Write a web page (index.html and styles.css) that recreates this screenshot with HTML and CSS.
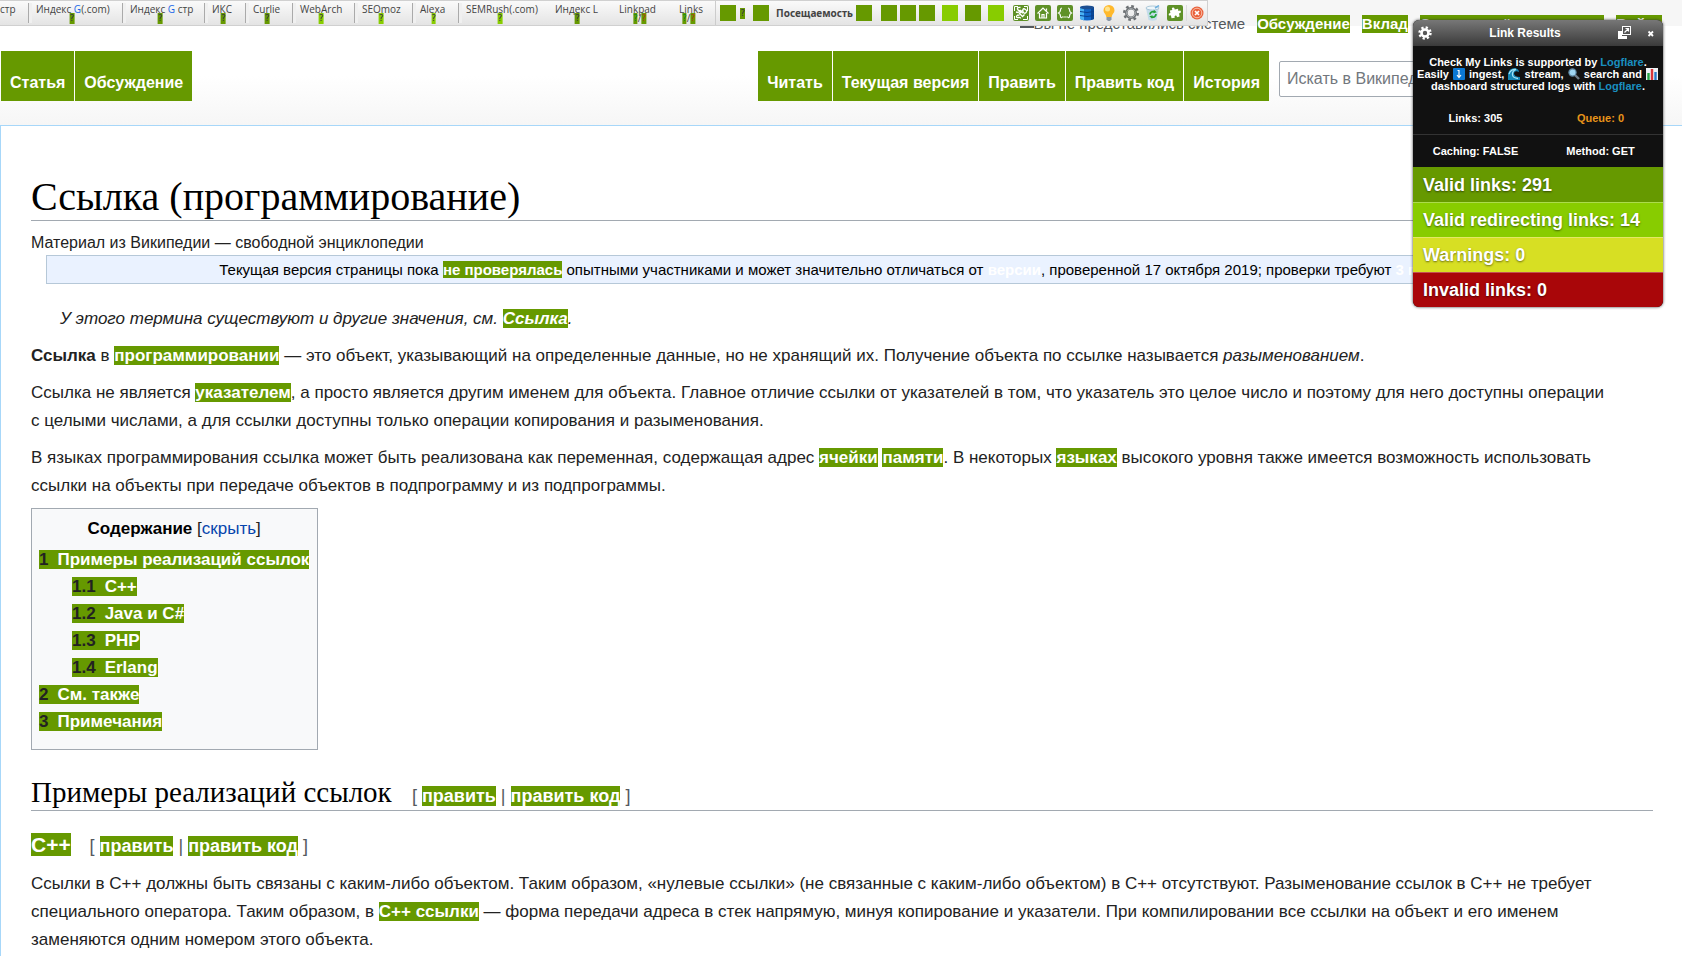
FILE: index.html
```html
<!DOCTYPE html>
<html lang="ru">
<head>
<meta charset="utf-8">
<title>Ссылка (программирование) — Википедия</title>
<link rel="stylesheet" href="styles.css">
</head>
<body>
<header class="site-head">
  <nav class="personal">
    <span class="guest"><svg class="person" viewBox="0 0 14 14"><path d="M0 14V9q7-4 14 0v5z" fill="#54595d"/></svg>Вы не представились системе</span>
    <a class="hl" href="#">Обсуждение</a>
    <a class="hl" href="#">Вклад</a>
    <a class="hl" href="#">Создать учётную запись</a>
    <a class="hl" href="#">Войти</a>
  </nav>
  <div class="tabs-row">
    <nav class="tabs"><a href="#">Статья</a><a href="#">Обсуждение</a></nav>
    <nav class="tabs views"><a href="#">Читать</a><a href="#">Текущая версия</a><a href="#">Править</a><a href="#">Править код</a><a href="#">История</a></nav>
    <input class="search" type="search" placeholder="Искать в Википедии" aria-label="Искать в Википедии">
  </div>
</header>

<main class="content">
  <h1>Ссылка (программирование)</h1>
  <p class="sub">Материал из Википедии — свободной энциклопедии</p>
  <p class="notice">Текущая версия страницы пока <a class="hl" href="#">не проверялась</a> опытными участниками и может значительно отличаться от <a class="ghost" href="#">версии</a>, проверенной 17 октября 2019; проверки требуют <a class="ghost" href="#">3 правки</a>.</p>
  <p class="hatnote">У этого термина существуют и другие значения, см. <a class="hl" href="#">Ссылка</a>.</p>
  <p><b>Ссылка</b> в <a class="hl" href="#">программировании</a> — это объект, указывающий на определенные данные, но не хранящий их. Получение объекта по ссылке называется <i>разыменованием</i>.</p>
  <p>Ссылка не является <a class="hl" href="#">указателем</a>, а просто является другим именем для объекта. Главное отличие ссылки от указателей в том, что указатель это целое число и поэтому для него доступны операции<br>с целыми числами, а для ссылки доступны только операции копирования и разыменования.</p>
  <p>В языках программирования ссылка может быть реализована как переменная, содержащая адрес <a class="hl" href="#">ячейки</a> <a class="hl" href="#">памяти</a>. В некоторых <a class="hl" href="#">языках</a> высокого уровня также имеется возможность использовать<br>ссылки на объекты при передаче объектов в подпрограмму и из подпрограммы.</p>
  <nav class="toc">
    <div class="toc-title"><b>Содержание</b> [<a href="#">скрыть</a>]</div>
    <ul>
      <li><a class="hl" href="#"><span class="num">1</span>Примеры реализаций ссылок</a>
        <ul>
          <li><a class="hl" href="#"><span class="num">1.1</span>C++</a></li>
          <li><a class="hl" href="#"><span class="num">1.2</span>Java и C#</a></li>
          <li><a class="hl" href="#"><span class="num">1.3</span>PHP</a></li>
          <li><a class="hl" href="#"><span class="num">1.4</span>Erlang</a></li>
        </ul>
      </li>
      <li><a class="hl" href="#"><span class="num">2</span>См. также</a></li>
      <li><a class="hl" href="#"><span class="num">3</span>Примечания</a></li>
    </ul>
  </nav>
  <h2>Примеры реализаций ссылок <span class="edit">[ <a class="hl" href="#">править</a> | <a class="hl" href="#">править код</a> ]</span></h2>
  <h3><a class="hl" href="#">C++</a> <span class="edit">[ <a class="hl" href="#">править</a> | <a class="hl" href="#">править код</a> ]</span></h3>
  <p>Ссылки в C++ должны быть связаны с каким-либо объектом. Таким образом, «нулевые ссылки» (не связанные с каким-либо объектом) в C++ отсутствуют. Разыменование ссылок в C++ не требует<br>специального оператора. Таким образом, в <a class="hl" href="#">C++ ссылки</a> — форма передачи адреса в стек напрямую, минуя копирование и указатели. При компилировании все ссылки на объект и его именем<br>заменяются одним номером этого объекта.</p>
</main>

<div class="seobar">
  <div class="metrics">
    <div class="metric cut">стр</div>
    <div class="metric sep">Индекс <span><em>G</em>(.com)</span><a href="#">?</a></div>
    <div class="metric sep">Индекс <em>G</em> стр<a href="#">?</a></div>
    <div class="metric sep">ИКС<a href="#">?</a></div>
    <div class="metric sep">Curlie<a href="#">?</a></div>
    <div class="metric sep">WebArch<a class="lime" href="#">?</a></div>
    <div class="metric sep">SEOmoz<a class="lime" href="#">?</a></div>
    <div class="metric sep">Alexa<a class="lime" href="#">?</a></div>
    <div class="metric sep">SEMRush(.com)<a class="lime" href="#">?</a></div>
    <div class="metric">Индекс L<a href="#">?</a></div>
    <div class="metric">Linkpad<span class="pair"><a class="g" href="#">?</a>/<a class="r" href="#">?</a></span></div>
    <div class="metric">Links<span class="pair"><a class="g" href="#">?</a>/<a class="r" href="#">?</a></span></div>
  </div>
  <div class="tools">
    <button class="sq" aria-label="Возраст"></button>
    <a class="q" href="#">?</a>
    <button class="sq wide" aria-label="Архив"></button>
    <b class="visits">Посещаемость</b>
    <button class="sq" aria-label="Счётчик"></button>
    <span class="trio"><button class="sq" aria-label="Whois"></button><button class="sq" aria-label="IP"></button><button class="sq" aria-label="Сайты"></button></span>
    <button class="sq lime" aria-label="Robots"></button>
    <button class="sq" aria-label="Sitemap"></button>
    <button class="sq lime" aria-label="Плотность"></button>
  </div>
  <div class="icons">
    <button aria-label="SEO"><svg viewBox="0 0 16 16"><rect width="16" height="16" rx="2" fill="#5f9127"/><path d="M1.500 6V1.500H5M11 1.500h3.500V6M14.500 11v3.500H10M5 14.500H1.500V11" fill="none" stroke="#fff"/><path d="M7.500 2.500Q4 2 4.500 4T7 5.500 5 7.500L3 7M10 5L6.500 8.500l3 3 2-2M8.200 6.800l1.600 1.600M12.500 4.500q2 1.500.5 3t-2.500 0-.5-3 2.500 0zM6.500 10q-3 0-3 1.500t2 1 2 1" fill="none" stroke="#fff" stroke-width="1.300"/></svg></button>
    <button aria-label="Главная"><svg viewBox="0 0 16 16"><rect width="16" height="16" rx="2" fill="#5f9127"/><path d="M2.500 8.500L8 3l5.500 5.500M4.500 8v5h7V8M7 13v-3.500h2V13M11.500 3.500v2" fill="none" stroke="#fff" stroke-width="1.200"/></svg></button>
    <button aria-label="Код"><svg viewBox="0 0 16 16"><rect width="16" height="16" rx="2" fill="#5f9127"/><path d="M5 3Q3.500 3 3.500 5T1.500 8q2 1 2 3T5 12.500M11 3q1.500 0 1.500 2t2 3q-2 1-2 3T11 12.500" fill="none" stroke="#fff" stroke-width="1.200"/><path d="M5.300 12h1.200M7.400 12h1.200M9.500 12h1.200" stroke="#fff" stroke-width="1.300"/></svg></button>
    <button aria-label="База данных"><svg viewBox="0 0 16 16"><path d="M1 2v12q7 3 14 0V2z" fill="#1167c9"/><path d="M1 2v12q2 1 4 1.300V2z" fill="#49b2f4"/><path d="M12 2v13q2-.5 3-1V2z" fill="#0a4796"/><ellipse cx="8" cy="2.400" rx="7" ry="1.900" fill="#1d4f91"/><path d="M1 6.500q7 2 14 0M1 10.500q7 2 14 0" fill="none" stroke="#0a3f8d"/></svg></button>
    <button aria-label="Подсветка"><svg viewBox="0 0 16 16"><path d="M8 0a5.500 5.500 0 0 0-5.500 5.500C2.500 8 5 9 5.300 12h5.400C11 9 13.500 8 13.500 5.500A5.500 5.500 0 0 0 8 0z" fill="#ffb92c"/><circle cx="6.500" cy="4" r="2.500" fill="#ffe38c"/><path d="M5.500 12h5v2.500L9 16H7l-1.500-1.500z" fill="#8a98a8"/></svg></button>
    <button aria-label="Настройки"><svg viewBox="0 0 16 16"><circle cx="8" cy="8" r="6.800" fill="none" stroke="#6c7073" stroke-width="2.400" stroke-dasharray="2.700 2.640"/><circle cx="8" cy="8" r="4.700" fill="none" stroke="#6c7073" stroke-width="2.600"/><circle cx="8" cy="8" r="4.400" fill="none" stroke="#a9adb0"/></svg></button>
    <button aria-label="Обновить"><svg viewBox="0 0 16 16"><path d="M1 3l2.500 12q4 1.500 8 0L14 3z" fill="#c3dcea"/><ellipse cx="7.500" cy="3" rx="6.500" ry="2" fill="#eef6fa" stroke="#8fb4ca" stroke-width=".7"/><path d="M5 9.500A3 3 0 0 1 9.500 7M11 9A3 3 0 0 1 6.500 11.700" fill="none" stroke="#24a33a" stroke-width="1.700"/><path d="M8.800 4.800l3 2.500-3.300 1zM7.200 13.700L4.300 11.200l3.300-1z" fill="#24a33a"/><path d="M10 3l4-2.500" stroke="#6fb0de" stroke-width="1.500"/></svg></button>
    <button aria-label="Плагины"><svg viewBox="0 0 16 16"><rect width="16" height="16" rx="2" fill="#5f9127"/><g transform="rotate(-12 8 8)"><path d="M3.500 4.500H6q-.8-2.200 1-2.300T8.500 4.500h3.300v2.300q2.200-.8 2.300 1t-2.300 1.500v3.200H9q.6-2-1-2t-1.200 2H3.500V9.300q-2 .6-2-1t2-1.200z" fill="#fff"/></g></svg></button>
    <button class="shut" aria-label="Закрыть панель"><svg viewBox="0 0 16 16"><circle cx="8" cy="8" r="6.500" fill="#e9603a"/><circle cx="8" cy="8" r="4.800" fill="none" stroke="#f9c0a8"/><path d="M6 6l4 4M10 6l-4 4" stroke="#fff" stroke-width="1.700"/></svg></button>
  </div>
</div>

<aside class="results">
  <div class="results-head">
    <button aria-label="Options"><svg viewBox="0 0 14 14"><circle cx="7" cy="7" r="5.500" fill="none" stroke="#fff" stroke-width="2.400" stroke-dasharray="2.200 2.120"/><circle cx="7" cy="7" r="3.500" fill="none" stroke="#fff" stroke-width="2.600"/></svg></button>
    <h4>Link Results</h4>
    <button class="pop" aria-label="Export"><svg viewBox="0 0 14 14"><path d="M0 5h4v5h5v3H0z" fill="#fff"/><rect x="4.500" y=".5" width="8" height="8" fill="#555" stroke="#fff"/><path d="M6.500 6.500L10 3M7.500 2.500h3v3" fill="none" stroke="#fff" stroke-width="1.200"/></svg></button>
    <button aria-label="Close"><svg class="x" viewBox="0 0 8 8"><path d="M1.500 2.500l4.500 4.500M6 2.500L1.500 7" stroke="#fff" stroke-width="1.800"/></svg></button>
  </div>
  <p class="sponsor">Check My Links is supported by <a href="#">Logflare</a>.<br>Easily <svg viewBox="0 0 12 12"><rect width="12" height="12" rx="1" fill="#0b78d4"/><path d="M4.500 2.500H6V9M4 7l2 2.500L8 7" fill="none" stroke="#fff" stroke-width="1.200"/></svg> ingest, <svg viewBox="0 0 12 12"><path d="M0 12V6Q1 0 7 0q4 1 4 4Q7 2 6 5q0 4 6 4v3z" fill="#1687b5"/><path d="M1 6Q3 1 8 1.500 4 3 4.500 7 5 10 10 10.500" fill="none" stroke="#a4e3f5" stroke-width="1.300"/></svg> stream, <svg viewBox="0 0 12 12"><path d="M7 7l4 4" stroke="#6f7c88" stroke-width="2.400"/><circle cx="4.500" cy="4.500" r="3.600" fill="#9fd5f2" stroke="#5f87a3" stroke-width="1.200"/></svg> search and <svg viewBox="0 0 12 12"><rect width="12" height="12" fill="#eef2f5"/><path d="M2.500 12V5" stroke="#28a745" stroke-width="2.400"/><path d="M6 12V1" stroke="#d7363c" stroke-width="2.400"/><path d="M9.500 12V4" stroke="#2879c9" stroke-width="2.400"/></svg><br>dashboard structured logs with <a href="#">Logflare</a>.</p>
  <div class="pairs"><span>Links: 305</span><span class="queue">Queue: 0</span></div>
  <div class="pairs second"><span>Caching: FALSE</span><span>Method: GET</span></div>
  <div class="stat valid">Valid links: 291</div>
  <div class="stat redirect">Valid redirecting links: 14</div>
  <div class="stat warn">Warnings: 0</div>
  <div class="stat invalid">Invalid links: 0</div>
</aside>
</body>
</html>
```
FILE: styles.css
```css
* { box-sizing: border-box; }
html { overflow: hidden; }
body {
  margin: 0;
  position: relative;
  background: #fff;
  color: #222;
  font: 17px/28px "Liberation Sans", Arial, sans-serif;
}
a { color: #0645ad; text-decoration: none; }
button { border: 0; padding: 0; background: none; color: inherit; font: inherit; display: block; }
svg { display: block; }
.hl { background: #690; color: #fff; font-weight: bold; }

.site-head {
  padding-top: 14px;
  height: 125px;
  background: linear-gradient(#f6f6f6 0 26px, #fff 26px 76px, #f6f6f6 125px);
}
.personal {
  display: flex;
  justify-content: flex-end;
  gap: 12px;
  padding-right: 20px;
  font-size: 15px;
  line-height: 20px;
  height: 37px;
}
.personal .hl { height: 18px; line-height: 18px; margin-top: 1px; }
.guest { color: #54595d; display: flex; }
.person { width: 14px; height: 14px; }
.tabs-row { display: flex; padding-left: 1px; }
.tabs { display: flex; gap: 1px; }
.tabs a {
  height: 50px;
  padding: 19px 9px 0;
  background: #690;
  color: #fff;
  font-weight: bold;
  font-size: 16px;
  line-height: 26px;
}
.views { margin-left: auto; }
.search {
  width: 374px;
  height: 36px;
  margin: 10px 29px 0 10px;
  padding: 0 7px;
  border: 1px solid #a2a9b1;
  border-radius: 2px;
  background: #fff;
  font: 16px "Liberation Sans", Arial, sans-serif;
}
.search::placeholder { color: #72777d; }

.content {
  border: 1px solid #a7d7f9;
  border-right: 0;
  padding: 48px 29px 30px 30px;
}
.content p { margin: 0 0 9px; }
h1, h2, h3 { margin: 0; font-weight: normal; color: #000; }
h1, h2 { font-family: "Liberation Serif", Georgia, serif; border-bottom: 1px solid #a2a9b1; }
h1 { font-size: 40px; line-height: 46px; }
.content .sub { margin: 9px 0 0; font-size: 16px; line-height: 25px; }
.content .notice {
  margin: 0 15px 21px;
  border: 1px solid #b6c8d8;
  background: #eaf2ff;
  color: #000;
  font-size: 15px;
  line-height: 27px;
  text-align: center;
}
.ghost { color: #fff; font-weight: bold; }
.content .hatnote { margin-bottom: 9px; padding-left: 29px; font-style: italic; }
.toc {
  width: fit-content;
  border: 1px solid #a2a9b1;
  background: #f8f9fa;
  margin-top: -1px;
  padding: 6px 8px 14px 7px;
  font-size: 17px;
  line-height: 27px;
}
.toc-title { text-align: center; margin-bottom: 4px; }
.toc-title b { color: #000; }
.toc ul { margin: 0; padding: 0; list-style: none; }
.toc ul ul { padding-left: 33px; }
.num { color: #222; padding-right: 9px; }
h2 { margin-top: 24px; font-size: 29px; line-height: 36px; }
h3 { margin: 19px 0 10px; font-size: 21px; line-height: 30px; }
.edit { margin-left: 13px; font: 18px "Liberation Sans", Arial, sans-serif; color: #54595d; }

.seobar {
  position: absolute;
  left: 0;
  top: 0;
  width: 1208px;
  height: 26px;
  display: flex;
  border: 1px solid #d0d0d0;
  border-left: 0;
  background: linear-gradient(#fafafa, #e4e4e4);
  color: #444;
  font: 10px/12px "Open Sans", Tahoma, sans-serif;
}
.metrics {
  display: grid;
  grid-template-columns: 28px 94px 82px 41px 47px 62px 58px 46px 90px 64px 60px 36px;
  white-space: nowrap;
}
.metric { position: relative; padding: 2px 0 0 7px; margin-top: 2px; height: 20px; line-height: 8px; }
.metric em { color: #1a66e8; font-style: normal; }
.cut { padding-left: 0; }
.sep { border-left: 1px solid #aaa; box-shadow: inset 3px 0 #f0f0f0; }
.metric > a, .pair { position: absolute; left: 46%; top: 10px; transform: translateX(-50%); }
.metric a, .q { background: #690; color: #334; font: 9px/11px "DejaVu Sans", sans-serif; }
.metric a.lime { background: #8c0; }
.metric a.g { color: #0a8a2a; }
.metric a.r { color: #b33a12; }
.pair { line-height: 11px; display: flex; }
.tools { display: flex; align-items: center; margin-left: auto; border-left: 1px solid #ccc; padding-left: 4px; }
.sq { width: 16px; height: 16px; background: #690; margin-right: 7px; }
.sq.lime { background: #8c0; }
.sq.wide { margin-left: 8px; }
.q { margin-left: -3px; }
.visits { font: bold 10px "Noto Sans", Tahoma, sans-serif; margin-right: 3px; }
.trio { display: flex; gap: 3px; margin: 0 7px 0 2px; }
.trio .sq { margin: 0; }
.icons { display: flex; align-items: center; gap: 6px; padding: 0 2px; }
.icons svg { width: 16px; height: 16px; }
.shut { border-left: 1px solid #ddd; padding-left: 2px; margin-left: -3px; }

.results {
  position: absolute;
  top: 20px;
  right: 19px;
  width: 250px;
  overflow: hidden;
  border-radius: 6px;
  background: #111;
  box-shadow: 0 0 3px #333;
  color: #fff;
  font: bold 11px/12px "Liberation Sans", Arial, sans-serif;
}
.results-head {
  display: flex;
  align-items: center;
  gap: 9px;
  height: 26px;
  padding: 0 8px 0 5px;
  background: linear-gradient(#777, #3a3a3a);
}
.results-head svg { width: 14px; height: 14px; }
.results-head .x { width: 8px; height: 8px; }
.results-head h4 { flex: 1; margin: 0; text-align: center; font-size: 12px; }
.pop { margin-right: 6px; }
.sponsor { margin: 10px 0; text-align: center; white-space: nowrap; }
.sponsor a { color: #1a8fc0; }
.sponsor svg { display: inline-block; width: 12px; height: 12px; vertical-align: -2px; margin: 0 1px; }
.pairs { display: grid; grid-template-columns: 1fr 1fr; text-align: center; line-height: 32px; }
.second { border-top: 1px solid #333; }
.queue { color: #e8941a; }
.stat { height: 35px; padding-left: 10px; font-size: 18px; line-height: 35px; border-top: 1px solid rgba(255, 255, 255, .3); text-shadow: 0 1px 2px rgba(0, 0, 0, .5); }
.valid { background: #690; border-top-color: #690; }
.redirect { background: #8c0; }
.warn { background: #d7df23; }
.invalid { background: #a90609; }
```
